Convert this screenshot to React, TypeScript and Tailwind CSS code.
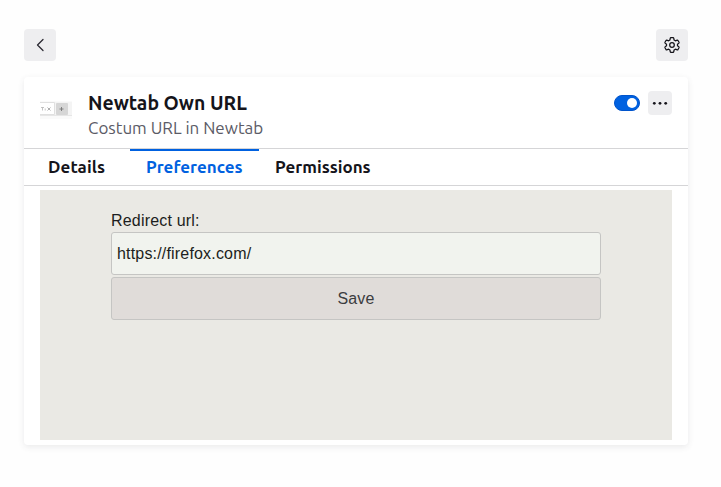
import React from "react";

const tabBase = "h-9 border-t-2 px-4 text-[17px] leading-[31px] font-bold whitespace-nowrap";

function Thumbnail() {
  return (
    <svg className="mt-0.5 size-8 shrink-0" viewBox="0 0 32 32">
      <rect y="8" width="32" height="18" fill="#fafafa" />
      <rect y="9" width="32" height="14" fill="#f4f4f4" />
      <rect y="22" width="32" height="1" fill="#e6e6e6" />
      <path d="M0 9.5H14.5V21.5H0" fill="#fff" stroke="#e0e0e0" />
      <rect x="16" y="10" width="12" height="12" rx="1" fill="#d6d6d6" />
      <path d="M19.5 16h4M21.5 14v4" stroke="#777" strokeWidth=".9" />
      <path d="M7.5 14.5l3 3M10.5 14.5l-3 3" stroke="#999" strokeWidth=".8" />
      <path d="M1 14.5h3M2.5 14.5v3M5.2 15.5v2" stroke="#b5b5b5" strokeWidth=".8" fill="none" />
    </svg>
  );
}

export default function App() {
  return (
    <div className="flex h-[487px] w-[721px] flex-col bg-[#fefefe] pt-[29px] pr-[33px] pl-6 font-['Ubuntu','Noto_Sans',sans-serif] text-[#15141a]">
      <header className="flex h-8 shrink-0 justify-between">
        <button className="flex size-8 items-center justify-center rounded bg-[#eeeef0]" aria-label="Back">
          <svg className="size-4" viewBox="0 0 16 16" fill="none" stroke="#2b2a33" strokeWidth="1.3" strokeLinecap="round" strokeLinejoin="round">
            <path d="M11 2.5 5.5 8 11 13.5" />
          </svg>
        </button>
        <button className="flex size-8 items-center justify-center rounded bg-[#eeeef0]" aria-label="Settings">
          <svg className="size-4" viewBox="0 0 16 16" fill="none" stroke="#15141a" strokeWidth="1.25" strokeLinejoin="round">
            <path d="M6.9.7h2.2q.5 0 .6.5l.4 1.8 1.3.8 1.8-.6q.5-.1.8.3l1 1.8q.2.4-.1.8L13.5 7.300v1.400l1.400 1.200q.3.4.1.8l-1 1.800q-.3.4-.8.3l-1.800-.6-1.300.8-.4 1.800q-.1.5-.6.5H6.900q-.5 0-.6-.5l-.4-1.800-1.300-.8-1.800.6q-.5.1-.8-.3l-1-1.800q-.2-.4.1-.8L2.500 8.700V7.300L1.100 6.100q-.3-.4-.1-.8l1-1.800q.3-.4.8-.3l1.800.6 1.300-.8.4-1.800q.1-.5.6-.5z" />
            <circle cx="8" cy="8" r="2.3" />
          </svg>
        </button>
      </header>
      <main className="mt-4 flex h-[368px] shrink-0 flex-col rounded bg-white shadow-[0_2px_6px_rgba(58,57,68,0.1)]">
        <section className="flex h-[71px] shrink-0 px-4 pt-[14px]">
          <Thumbnail />
          <div className="ml-4 grow whitespace-nowrap">
            <h1 className="text-[19.4px] leading-6 font-bold">Newtab Own URL</h1>
            <p className="text-[17px] leading-[26px] text-[#5b5b66]">Costum URL in Newtab</p>
          </div>
          <div className="flex h-6 gap-2">
            <span className="mt-1 flex h-4 w-[26px] items-center justify-end rounded-full border border-[#0054cc] bg-[#0061e0] pr-[2px]">
              <span className="size-[10px] rounded-full bg-white" />
            </span>
            <button className="flex size-6 items-center justify-center rounded bg-[#eeeef0]" aria-label="More options">
              <svg className="size-4" viewBox="0 0 16 16" fill="#15141a">
                <circle cx="2.3" cy="8.3" r="1.4" />
                <circle cx="8" cy="8.3" r="1.4" />
                <circle cx="13.7" cy="8.3" r="1.4" />
              </svg>
            </button>
          </div>
        </section>
        <nav className="flex h-[38px] shrink-0 border-y border-[#d5d5d7] pl-2">
          <span className={`${tabBase} w-[98px] border-transparent tracking-[0.1px]`}>Details</span>
          <span className={`${tabBase} w-[129px] border-[#0061e0] text-[#0061e0]`}>Preferences</span>
          <span className={`${tabBase} border-transparent`}>Permissions</span>
        </nav>
        <section className="mx-4 mt-1 h-[250px] bg-[#eae9e4] px-[71px] pt-5 font-['Liberation_Sans',Arial,sans-serif] text-base leading-[22px] tracking-[0.18px] text-[#1c1e20]">
          <label className="block">Redirect url:</label>
          <div className="flex h-[43px] items-center rounded-[3px] border border-[#c5c5c3] bg-[#f1f3ee] px-[5px]">https://firefox.com/</div>
          <button className="mt-0.5 flex h-[43px] w-full items-center justify-center rounded-[3px] border border-[#c5c5c3] bg-[#e0dcd9] tracking-[0.18px] text-[#3b3d3f]">Save</button>
        </section>
      </main>
    </div>
  );
}
